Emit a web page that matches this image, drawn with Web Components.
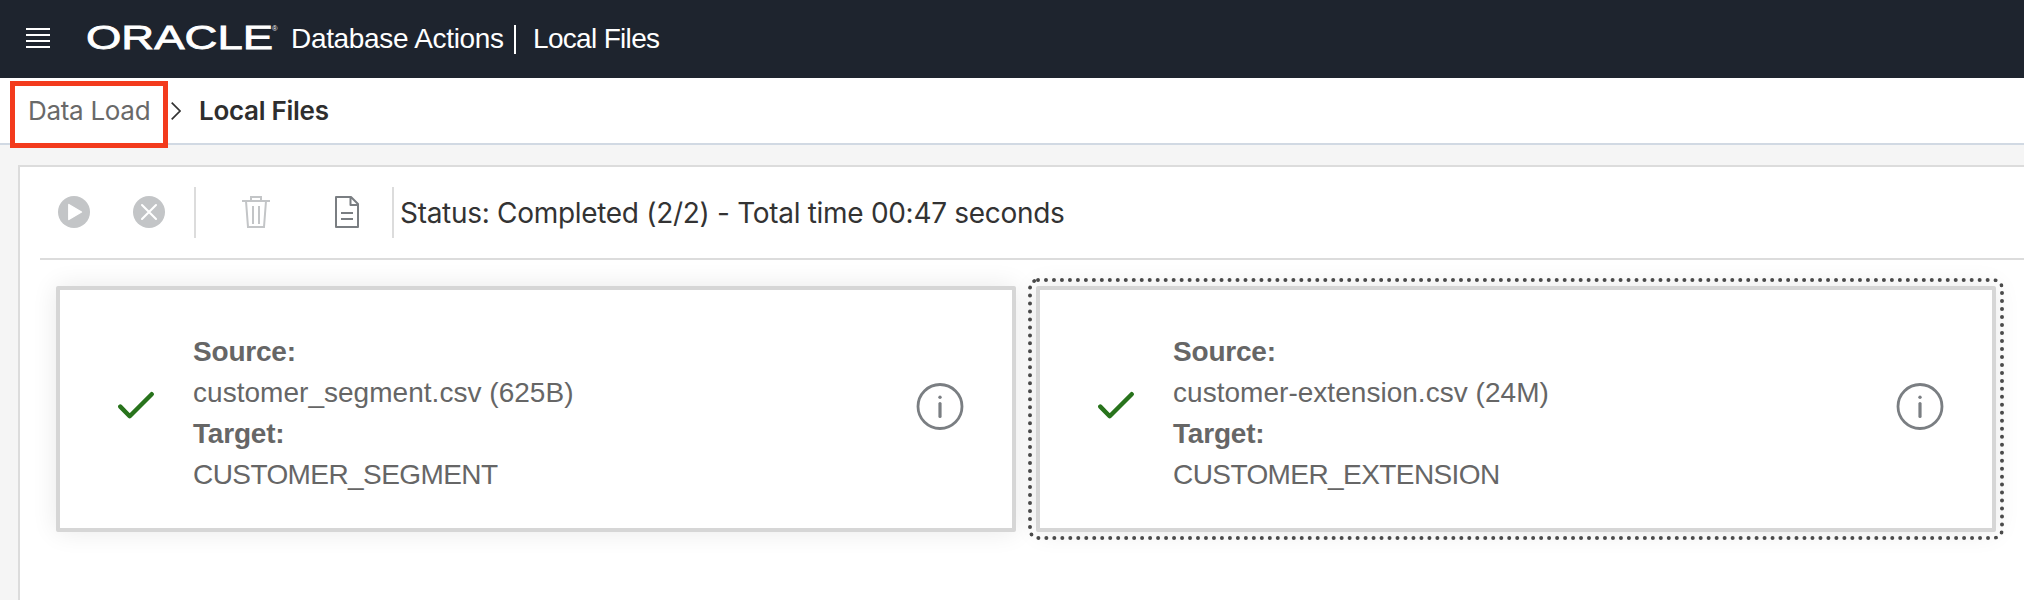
<!DOCTYPE html>
<html lang="en">
<head>
<meta charset="utf-8">
<title>Database Actions | Local Files</title>
<style>
html,body{margin:0;height:100%;overflow:hidden}
body{font-family:"Liberation Sans",Arial,sans-serif;background:#f5f5f5;color:#333}
</style>
</head>
<body>
<data-load-page></data-load-page>
<script>
const define = (name, html, setup) => customElements.define(name, class extends HTMLElement {
  constructor() {
    super();
    const t = document.createElement('template');
    t.innerHTML = html;
    this.attachShadow({mode: 'open'}).append(t.content.cloneNode(true));
    if (setup) setup(this);
  }
});

define('app-header', `
<style>
:host{display:flex;box-sizing:border-box;height:78px;padding-left:26px;background:#1e242e;color:#fff;font-size:28px;line-height:32px;white-space:nowrap}
svg{display:block;flex:none}
.menu{margin-top:28px}
.logo{margin:15px 0 0 33px;overflow:visible}
.product{margin:23px 0 0 11px;width:223px;letter-spacing:-.32px}
.bar{width:2px;height:29px;margin-top:25px;background:#fff}
.section{margin:23px 0 0 17px;letter-spacing:-.68px}
</style>
<svg class="menu" width="24" height="20" viewBox="0 0 24 20" stroke="#fff" stroke-width="2"><path d="M0 1h24M0 7h24M0 13h24M0 19h24"/></svg>
<svg class="logo" width="197" height="46" viewBox="0 0 197 46" fill="#fff"><text x="3" y="33.5" font-family="Liberation Sans" font-size="33.5" textLength="187" lengthAdjust="spacingAndGlyphs" stroke="#fff" stroke-width=".8">ORACLE</text><text x="189" y="16" font-family="Liberation Sans" font-size="7.5">®</text></svg>
<div class="product">Database Actions</div><div class="bar"></div><div class="section">Local Files</div>`);

define('bread-crumbs', `
<style>
:host{display:flex;box-sizing:border-box;height:67px;background:#fff;border-bottom:2px solid #d1d9e3;font:26px/32px Inter,sans-serif;white-space:nowrap;position:relative}
.link{margin:17px 0 0 28px;width:143px;color:#696969;letter-spacing:-.3px}
svg{display:block;margin-top:24px}
.here{margin:17px 0 0 18px;font-weight:600;color:#2e2e2e;letter-spacing:-.28px}
.mark{position:absolute;left:9.5px;top:2.5px;width:148px;height:57px;border:5px solid #f33b1d}
</style>
<div class="link">Data Load</div>
<svg width="10" height="18" viewBox="0 0 10 18" fill="none" stroke="#333" stroke-width="1.7"><path d="M.7.7 9 9 .7 17.3"/></svg>
<div class="here">Local Files</div>
<div class="mark"></div>`);

define('load-toolbar', `
<style>
:host{display:flex;box-sizing:border-box;height:93px;margin-left:20px;padding:20px 0 0 18px;border-bottom:2px solid #dcdcdc}
svg{display:block;flex:none;margin-top:9px}
.stop{margin-left:43px}
.sep{width:2px;height:51px;background:#dcdcdc;flex:none}
.s1{margin-left:29px}.s2{margin-left:33px}
.trash{margin-left:46px}.doc{margin-left:65px}
.status{margin:9px 0 0 6px;font:28px/34px Inter,sans-serif;letter-spacing:-.3px;color:#333;white-space:nowrap}
</style>
<svg width="32" height="32" viewBox="0 0 32 32"><circle cx="16" cy="16" r="16" fill="#c3c5c7"/><path d="M10.8 8.5v15L23.5 16z" fill="#fff" stroke="#fff" stroke-width="1.4" stroke-linejoin="round"/></svg>
<svg class="stop" width="32" height="32" viewBox="0 0 32 32"><circle cx="16" cy="16" r="16" fill="#c3c5c7"/><path d="m9 9 14 14M23 9 9 23" stroke="#fff" stroke-width="2.1" stroke-linecap="round"/></svg>
<div class="sep s1"></div>
<svg class="trash" width="28" height="32" viewBox="0 0 28 32" fill="none" stroke="#c3c5c7" stroke-width="2"><path d="M0 5h28M9 5V1h10v4M4 5l2 26h16l2-26M11 10v18M17 10v18"/></svg>
<svg class="doc" width="24" height="32" viewBox="0 0 24 32" fill="none" stroke="#7a7e82" stroke-width="2" stroke-linejoin="round"><path d="M1 1h15l7 7v23H1zM15.5 1v8H23M6 17h12M6 23h12"/></svg>
<div class="sep s2"></div>
<div class="status"><slot></slot></div>`);

define('load-card', `
<style>
:host{display:flex;box-sizing:border-box;width:960px;height:246px;flex:none;background:#fff;border:4px solid #d6d6d6;border-radius:2px;box-shadow:0 0 26px rgba(0,0,0,.09);color:#666;font-size:28px;line-height:41px;white-space:nowrap}
:host([focused]){outline:4px dotted #4a4a4a;outline-offset:4px}
svg{display:block;flex:none}
.check{margin:101px 0 0 58px}
.text{flex:1;margin:41px 0 0 39px}
b{display:block;letter-spacing:-.2px}
.name{letter-spacing:.03px}
.table{letter-spacing:-.58px}
.info{margin:93px 48px 0 0}
</style>
<svg class="check" width="36" height="28" viewBox="0 0 36 28" fill="none" stroke="#28731c" stroke-width="4.4" stroke-linecap="round" stroke-linejoin="round"><path d="m2.3 15.6 9.4 9.6L33.7 3.2"/></svg>
<div class="text"><b>Source:</b><div class="name"><slot name="source"></slot></div><b>Target:</b><div class="table"><slot name="target"></slot></div></div>
<svg class="info" width="48" height="48" viewBox="0 0 48 48"><circle cx="24" cy="23.5" r="22" fill="none" stroke="#7a7e82" stroke-width="2.8"/><circle cx="24" cy="14.3" r="1.7" fill="#7a7e82"/><path d="M24 20.5v13" stroke="#7a7e82" stroke-width="3.2" stroke-linecap="round"/></svg>`);

define('data-load-page', `
<style>
:host{display:flex;flex-direction:column;height:600px;overflow:hidden}
app-header,bread-crumbs{flex:none}
main{flex:1;margin:20px 0 0 18px;border:solid #dcdcdc;border-width:2px 0 0 2px;background:#fff}
.cards{display:flex;gap:20px;padding:26px 0 0 36px}
</style>
<app-header></app-header>
<bread-crumbs></bread-crumbs>
<main>
<load-toolbar>Status: Completed (2/2) - Total time 00:47 seconds</load-toolbar>
<div class="cards">
<load-card><span slot="source">customer_segment.csv (625B)</span><span slot="target">CUSTOMER_SEGMENT</span></load-card>
<load-card focused><span slot="source">customer-extension.csv (24M)</span><span slot="target">CUSTOMER_EXTENSION</span></load-card>
</div>
</main>`);
</script>
</body>
</html>
